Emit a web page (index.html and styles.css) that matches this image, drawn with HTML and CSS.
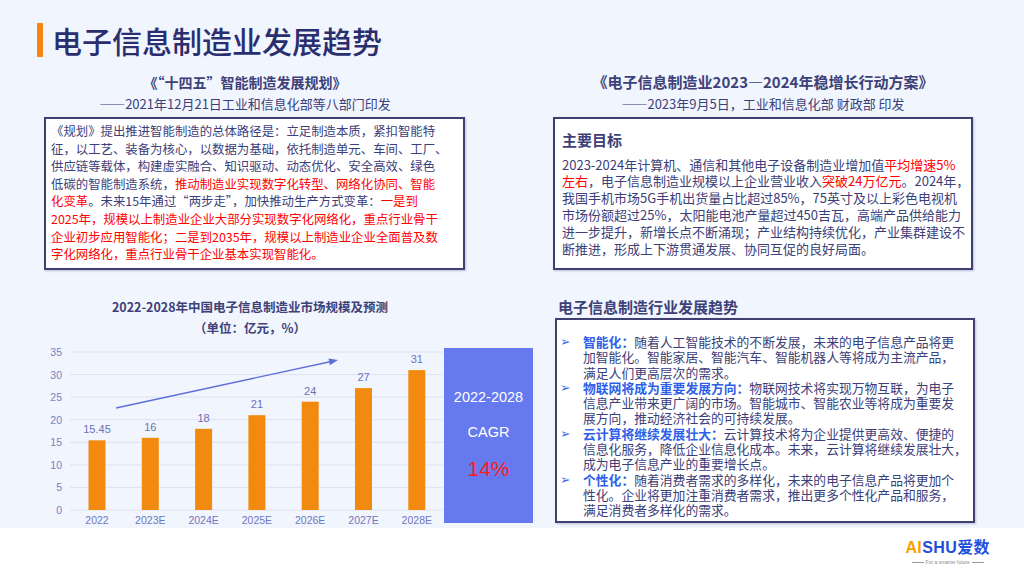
FILE: index.html
```html
<!DOCTYPE html>
<html lang="zh-CN">
<head>
<meta charset="utf-8">
<title>电子信息制造业发展趋势</title>
<link rel="stylesheet" href="styles.css">
</head>
<body>
<div class="slide">
  <header class="title-row">
    <span class="title-bar"></span>
    <h1>电子信息制造业发展趋势</h1>
  </header>

  <section class="top">
    <div class="col col-left">
      <h2 class="doc doc-left">《“十四五”智能制造发展规划》</h2>
      <p class="issuer issuer-left">——2021年12月21日工业和信息化部等八部门印发</p>
      <div class="box box-left">
        <p class="plan">《规划》提出推进智能制造的总体路径是：立足制造本质，紧扣智能特<br>征，以工艺、装备为核心，以数据为基础，依托制造单元、车间、工厂、<br>供应链等载体，构建虚实融合、知识驱动、动态优化、安全高效、绿色<br>低碳的智能制造系统，<span class="red">推动制造业实现数字化转型、网络化协同、智能<br>化变革</span>。未来15年通过“两步走”，加快推动生产方式变革：<span class="red">一是到<br>2025年，规模以上制造业企业大部分实现数字化网络化，重点行业骨干<br>企业初步应用智能化；二是到2035年，规模以上制造业企业全面普及数<br>字化网络化，重点行业骨干企业基本实现智能化。</span></p>
      </div>
    </div>
    <div class="col col-right">
      <h2 class="doc doc-right">《电子信息制造业2023—2024年稳增长行动方案》</h2>
      <p class="issuer">——2023年9月5日，工业和信息化部 财政部 印发</p>
      <div class="box box-right">
        <h3 class="goal-title">主要目标</h3>
        <p class="goal">2023-2024年计算机、通信和其他电子设备制造业增加值<span class="red">平均增速5%<br>左右</span>，电子信息制造业规模以上企业营业收入<span class="red">突破24万亿元</span>。2024年，<br>我国手机市场5G手机出货量占比超过85%，75英寸及以上彩色电视机<br>市场份额超过25%，太阳能电池产量超过450吉瓦，高端产品供给能力<br>进一步提升，新增长点不断涌现；产业结构持续优化，产业集群建设不<br>断推进，形成上下游贯通发展、协同互促的良好局面。</p>
      </div>
    </div>
  </section>

  <section class="bottom">
    <div class="chart">
      <div class="chart-title">2022-2028年中国电子信息制造业市场规模及预测</div>
      <div class="chart-unit">（单位：亿元，%）</div>
      <div class="chart-body">
        <svg class="plot" width="404" height="188" viewBox="0 0 404 188">
          <g class="grid">
            <line x1="30" y1="12" x2="403" y2="12"/>
            <line x1="30" y1="34.6" x2="403" y2="34.6"/>
            <line x1="30" y1="57.1" x2="403" y2="57.1"/>
            <line x1="30" y1="79.7" x2="403" y2="79.7"/>
            <line x1="30" y1="102.3" x2="403" y2="102.3"/>
            <line x1="30" y1="124.9" x2="403" y2="124.9"/>
            <line x1="30" y1="147.4" x2="403" y2="147.4"/>
            <line x1="30" y1="170" x2="403" y2="170"/>
          </g>
          <g class="ylab">
            <text x="22" y="16">35</text>
            <text x="22" y="38.6">30</text>
            <text x="22" y="61.1">25</text>
            <text x="22" y="83.7">20</text>
            <text x="22" y="106.3">15</text>
            <text x="22" y="128.9">10</text>
            <text x="22" y="151.4">5</text>
            <text x="22" y="174">0</text>
          </g>
          <g class="bars">
            <rect x="48.5" y="100.3" width="17" height="69.7"/>
            <rect x="101.8" y="97.8" width="17" height="72.2"/>
            <rect x="155.1" y="88.8" width="17" height="81.2"/>
            <rect x="208.4" y="75.2" width="17" height="94.8"/>
            <rect x="261.7" y="61.7" width="17" height="108.3"/>
            <rect x="315" y="48.1" width="17" height="121.9"/>
            <rect x="368.3" y="30.1" width="17" height="139.9"/>
          </g>
          <g class="vlab">
            <text x="57" y="93.3">15.45</text>
            <text x="110.3" y="90.8">16</text>
            <text x="163.6" y="81.8">18</text>
            <text x="216.9" y="68.2">21</text>
            <text x="270.2" y="54.7">24</text>
            <text x="323.5" y="41.1">27</text>
            <text x="376.8" y="23.1">31</text>
          </g>
          <g class="xlab">
            <text x="57" y="184">2022</text>
            <text x="110.3" y="184">2023E</text>
            <text x="163.6" y="184">2024E</text>
            <text x="216.9" y="184">2025E</text>
            <text x="270.2" y="184">2026E</text>
            <text x="323.5" y="184">2027E</text>
            <text x="376.8" y="184">2028E</text>
          </g>
          <line class="trend" x1="76" y1="68" x2="290" y2="21.7"/>
          <polygon class="trend-head" points="298,20 289.9,25.3 288.5,18.5"/>
        </svg>
        <div class="cagr">
          <span class="cagr-years">2022-2028</span>
          <span class="cagr-label">CAGR</span>
          <span class="cagr-value">14%</span>
        </div>
      </div>
    </div>

    <div class="trends">
      <h3 class="trends-title">电子信息制造行业发展趋势</h3>
      <div class="box box-trends">
        <div class="item"><span class="mark">➢</span><p><b>智能化：</b>随着人工智能技术的不断发展，未来的电子信息产品将更<br>加智能化。智能家居、智能汽车、智能机器人等将成为主流产品，<br>满足人们更高层次的需求。</p></div>
        <div class="item"><span class="mark">➢</span><p><b>物联网将成为重要发展方向：</b>物联网技术将实现万物互联，为电子<br>信息产业带来更广阔的市场。智能城市、智能农业等将成为重要发<br>展方向，推动经济社会的可持续发展。</p></div>
        <div class="item"><span class="mark">➢</span><p><b>云计算将继续发展壮大：</b>云计算技术将为企业提供更高效、便捷的<br>信息化服务，降低企业信息化成本。未来，云计算将继续发展壮大，<br>成为电子信息产业的重要增长点。</p></div>
        <div class="item"><span class="mark">➢</span><p><b>个性化：</b>随着消费者需求的多样化，未来的电子信息产品将更加个<br>性化。企业将更加注重消费者需求，推出更多个性化产品和服务，<br>满足消费者多样化的需求。</p></div>
      </div>
    </div>
  </section>
</div>

<footer class="footer">
  <div class="logo">
    <div class="logo-word"><span class="logo-ai">AI</span><span class="logo-shu">SHU爱数</span></div>
    <div class="logo-tag"><span class="tag-line"></span><span class="tag-text">For a smarter future</span><span class="tag-line"></span></div>
  </div>
</footer>
</body>
</html>
```

FILE: styles.css
```css
* { box-sizing: border-box; }

html, body {
  margin: 0;
  padding: 0;
  width: 1024px;
  height: 576px;
  overflow: hidden;
  background: #ffffff;
  font-family: "Noto Sans CJK SC", "Liberation Sans", sans-serif;
  color: #3c4079;
}

h1, h2, h3, p { margin: 0; }

.slide {
  height: 528px;
  background: #f0f5fe;
  padding-top: 23px;
  overflow: hidden;
}

/* title */
.title-row {
  display: flex;
  align-items: center;
  height: 34px;
  margin-left: 37px;
  gap: 9px;
}
.title-bar {
  width: 6px;
  height: 34px;
  background: #f5890f;
}
.title-row h1 {
  font-size: 30px;
  line-height: 34px;
  font-weight: 500;
  color: #2b2e6e;
}

/* top section */
.top {
  display: grid;
  grid-template-columns: 421px 420px;
  column-gap: 88px;
  margin-top: 17px;
  padding-left: 44px;
}
.doc {
  text-align: center;
  font-size: 14px;
  line-height: 16px;
  font-weight: 700;
  color: #3d4178;
}
.doc-left { padding-right: 19px; }
.doc-right { font-size: 15px; }
.issuer {
  margin-top: 6px;
  text-align: center;
  font-size: 13px;
  line-height: 16px;
  color: #3c4079;
}
.issuer-left { padding-right: 19px; }

.box {
  background: #ffffff;
  border: 2px solid #3d4070;
  box-shadow: 1px 1px 2px rgba(40, 44, 90, 0.25);
}
.box-left, .box-right {
  margin-top: 5px;
  height: 153px;
}
.red { color: #ff0000; }

.plan {
  padding: 4px 0 0 5px;
  font-size: 12.4px;
  line-height: 17.6px;
  white-space: nowrap;
}

.box-right { padding: 11px 0 0 7px; }
.goal-title {
  font-size: 15px;
  line-height: 20px;
  font-weight: 700;
  color: #3d4178;
}
.goal {
  margin-top: 6.6px;
  font-size: 13px;
  line-height: 16.8px;
  white-space: nowrap;
}

/* bottom section */
.bottom {
  display: grid;
  grid-template-columns: 515px 420px;
  margin-top: 28px;
  padding-left: 40px;
}
.chart-title, .chart-unit {
  width: 420px;
  text-align: center;
  font-size: 12.5px;
  line-height: 16px;
  font-weight: 700;
  color: #3d4178;
}
.chart-title { margin-top: 1px; }
.chart-unit { margin-top: 5px; }
.chart-body {
  display: flex;
  align-items: flex-start;
  margin-top: 4px;
}
.plot { display: block; flex: none; }
.plot text {
  font-family: "Liberation Sans", "Noto Sans CJK SC", sans-serif;
  font-size: 10.5px;
}
.grid line { stroke: #dde2f2; stroke-width: 1; }
.ylab text { text-anchor: end; fill: #7a7fc2; }
.bars rect { fill: #f38a10; }
.vlab text { text-anchor: middle; fill: #6c71b6; font-size: 11px; }
.xlab text { text-anchor: middle; fill: #7076c0; }
.trend { stroke: #5f6fd8; stroke-width: 1.4; }
.trend-head { fill: #5f6fd8; }

.cagr {
  margin-top: 8px;
  width: 89px;
  height: 175px;
  background: #6679ee;
  display: flex;
  flex-direction: column;
  align-items: center;
  font-family: "Liberation Sans", "Noto Sans CJK SC", sans-serif;
  color: #ffffff;
}
.cagr-years { margin-top: 40px; font-size: 14.5px; line-height: 18px; }
.cagr-label { margin-top: 17px; font-size: 14.5px; line-height: 18px; }
.cagr-value { margin-top: 15px; font-size: 21px; line-height: 26px; color: #ff1a1a; }

.trends-title {
  padding-left: 3px;
  font-size: 15px;
  line-height: 18px;
  font-weight: 700;
  color: #3d4178;
}
.box-trends {
  margin-top: 2px;
  height: 205px;
  padding: 14px 0 0 3px;
}
.item {
  display: flex;
  font-size: 12.8px;
  line-height: 15.3px;
}
.mark {
  flex: none;
  width: 23px;
  font-family: "DejaVu Sans", sans-serif;
  font-size: 12.5px;
  color: #3d6ae8;
}
.item p { white-space: nowrap; }
.item b { color: #2f5fe8; font-weight: 700; }

/* footer */
.footer {
  height: 48px;
  display: flex;
  justify-content: flex-end;
  padding: 11px 34px 0 0;
}
.logo {
  display: flex;
  flex-direction: column;
  align-items: center;
}
.logo-word {
  font-family: "Liberation Sans", "Noto Sans CJK SC", sans-serif;
  font-size: 16px;
  line-height: 18px;
  font-weight: 700;
  letter-spacing: 0.4px;
}
.logo-ai { color: #f5a100; }
.logo-shu { color: #1f4fdc; }
.logo-tag {
  display: flex;
  align-items: center;
  gap: 2px;
  margin-top: 2px;
}
.tag-line {
  width: 12px;
  height: 1px;
  background: #9a9a9a;
}
.tag-text {
  font-family: "Liberation Sans", sans-serif;
  font-size: 5px;
  line-height: 6px;
  color: #8a8a8a;
}
```
